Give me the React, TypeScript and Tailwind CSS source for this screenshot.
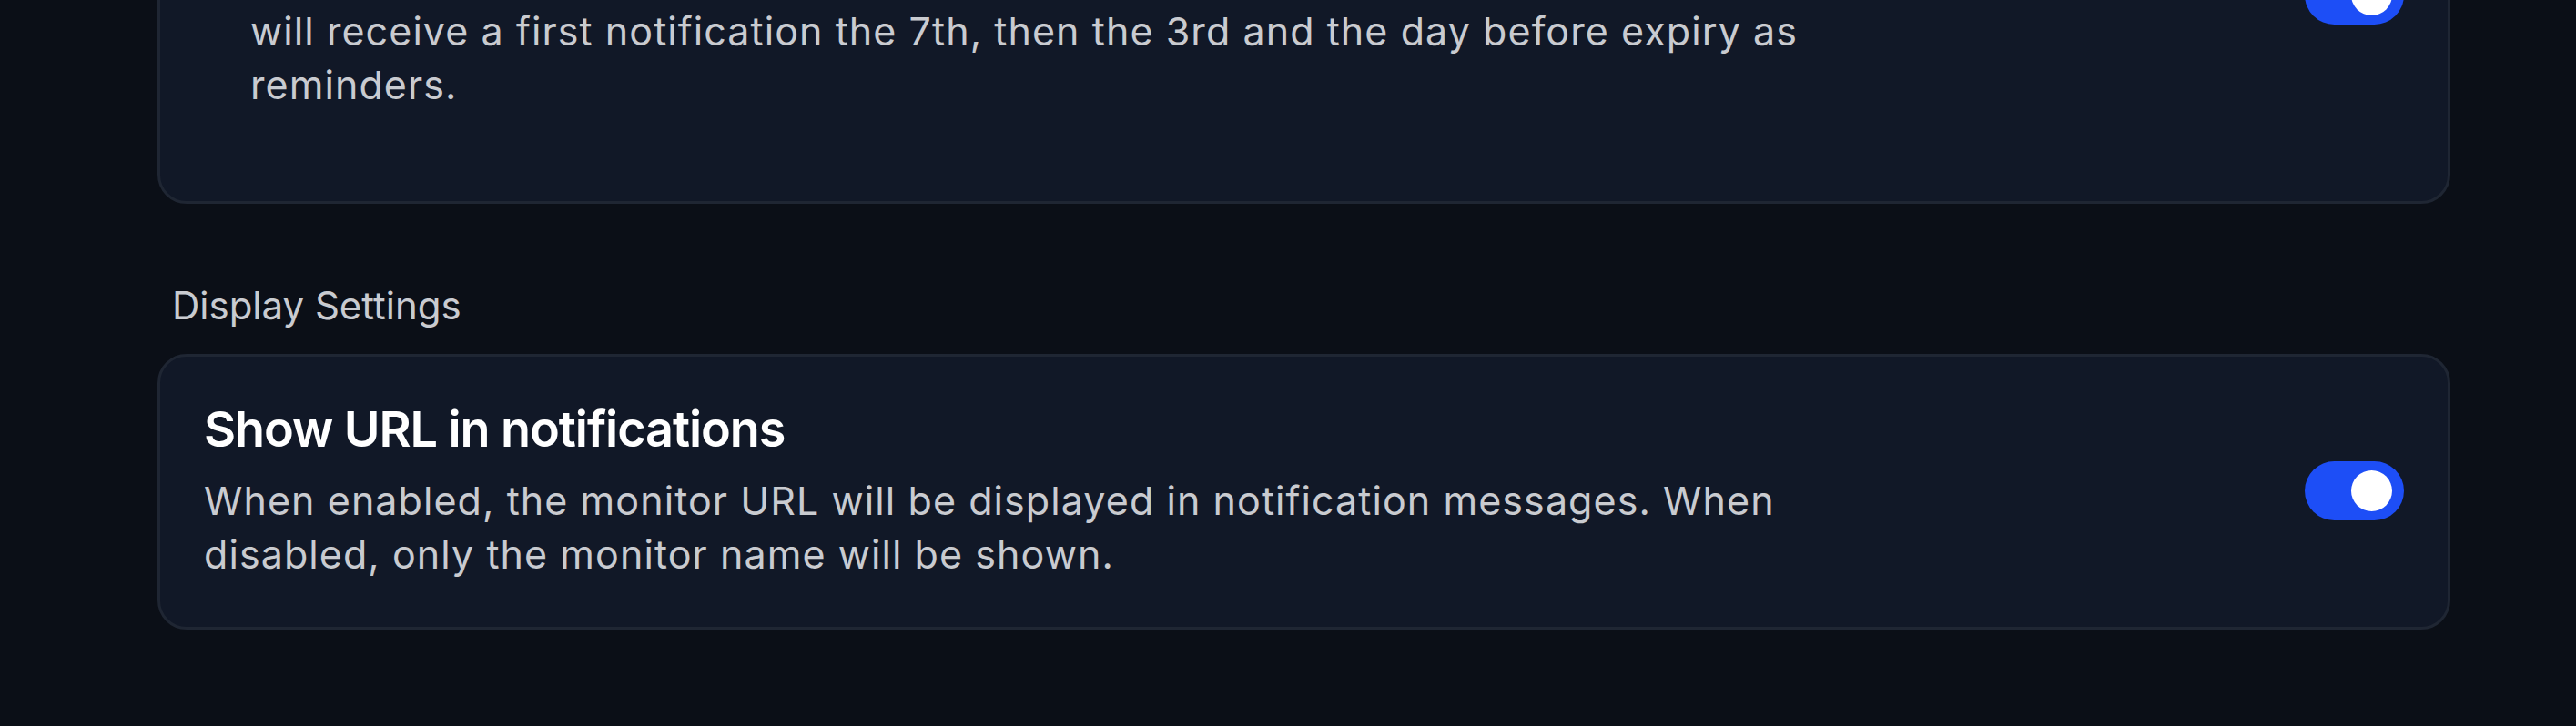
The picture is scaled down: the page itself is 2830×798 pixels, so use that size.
import React from 'react';

interface SettingCardProps {
  title: string;
  description: React.ReactNode;
  enabled: boolean;
  indentDescription?: boolean;
  className?: string;
}

function Toggle({ enabled }: { enabled: boolean }) {
  return (
    <div
      className={
        'flex h-[65px] w-[109px] shrink-0 items-center rounded-full ' +
        (enabled ? 'justify-end bg-[#1d4ef6] pr-[13px]' : 'justify-start bg-[#374151] pl-[13px]')
      }
    >
      <span className="block h-[45px] w-[45px] rounded-full bg-white" />
    </div>
  );
}

function SettingCard({ title, description, enabled, indentDescription, className }: SettingCardProps) {
  return (
    <div
      className={
        'flex items-center justify-between gap-12 rounded-[32px] border-[3px] border-[#1f2633] bg-[#111827] pl-[48px] pr-[48px] ' +
        (className ?? '')
      }
    >
      <div className="flex min-w-0 flex-col">
        <h3 className="text-[54px] font-semibold leading-[64px] tracking-[-0.02em] text-white">{title}</h3>
        <p
          className={
            'mt-[17px] max-w-[1800px] text-[43px] leading-[59px] tracking-[0.025em] text-[#c9cbd0] ' +
            (indentDescription ? 'pl-[51px]' : '')
          }
        >
          {description}
        </p>
      </div>
      <Toggle enabled={enabled} />
    </div>
  );
}

export default function App() {
  return (
    <div
      className="h-[798px] w-full overflow-hidden bg-[#0b0f17]"
      style={{ fontFamily: 'Inter, "Noto Sans", "Liberation Sans", sans-serif' }}
    >
      <div className="ml-[173px] mt-[-186px] flex w-[2519px] flex-col">
        <SettingCard
          className="pt-[48px] pb-[98px]"
          title="Domain expiry notifications"
          enabled
          indentDescription
          description={
            <>
              Once the threshold is reached, the monitor owner
              <br />
              will receive a first notification the 7th, then the 3rd and the day before expiry as reminders.
            </>
          }
        />

        <h2 className="mt-[82px] pl-[16px] text-[42px] leading-[60px] text-[#c9cbd0]">Display Settings</h2>

        <SettingCard
          className="mt-[23px] pt-[48px] pb-[50px]"
          title="Show URL in notifications"
          enabled
          description="When enabled, the monitor URL will be displayed in notification messages. When disabled, only the monitor name will be shown."
        />
      </div>
    </div>
  );
}
